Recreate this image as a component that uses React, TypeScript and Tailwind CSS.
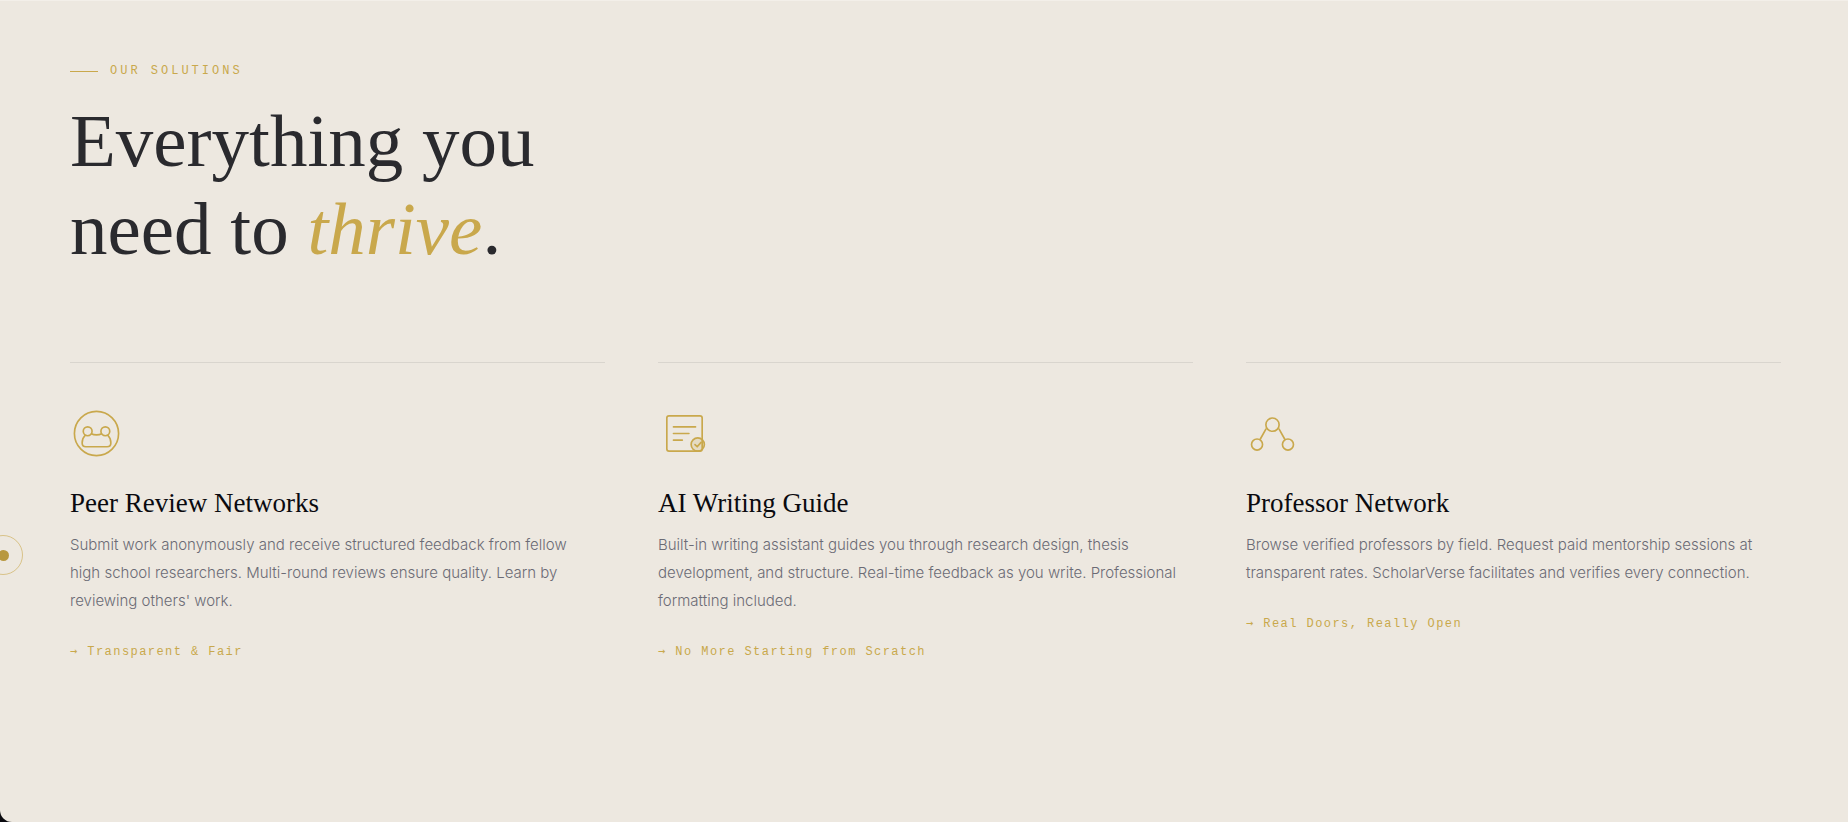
import type { ReactNode } from "react";

type Solution = {
  title: string;
  body: string;
  tag: string;
  icon: ReactNode;
};

const solutions: Solution[] = [
  {
    title: "Peer Review Networks",
    body: "Submit work anonymously and receive structured feedback from fellow high school researchers. Multi-round reviews ensure quality. Learn by reviewing others' work.",
    tag: "Transparent & Fair",
    icon: (
      <>
        <circle cx="24" cy="24" r="20" />
        <circle cx="16" cy="22" r="4" />
        <circle cx="32" cy="22" r="4" />
        <path d="M13.6 25.8c-1.8 1.8-2.6 4-2.6 6.800 0 2.400 1.200 3.400 3.400 3.400h19.200c2.200 0 3.400-1 3.400-3.400 0-2.800-.8-5-2.600-6.800" />
        <path d="M19.400 24.200c1.200.7 2.800 1 4.600 1s3.400-.3 4.600-1" />
      </>
    ),
  },
  {
    title: "AI Writing Guide",
    body: "Built-in writing assistant guides you through research design, thesis development, and structure. Real-time feedback as you write. Professional formatting included.",
    tag: "No More Starting from Scratch",
    icon: (
      <>
        <rect x="8" y="8" width="32" height="32" rx="2" />
        <path d="M14 18h20M14 24h14M14 30h8" />
        <circle cx="36" cy="34" r="6" fill="#c9a84c" fillOpacity="0.2" />
        <path d="M33.5 34l2 2 3.5-4" />
      </>
    ),
  },
  {
    title: "Professor Network",
    body: "Browse verified professors by field. Request paid mentorship sessions at transparent rates. ScholarVerse facilitates and verifies every connection.",
    tag: "Real Doors, Really Open",
    icon: (
      <>
        <circle cx="24" cy="16" r="6" />
        <circle cx="10" cy="34" r="5" />
        <circle cx="38" cy="34" r="5" />
        <path d="M18 20l-5 9M30 20l5 9" />
      </>
    ),
  },
];

const SolutionCard = ({ title, body, tag, icon }: Solution) => (
  <article className="border-t border-[#d9d5ce] pt-11">
    <svg
      viewBox="0 0 48 48"
      className="h-[53px] w-[53px]"
      fill="none"
      stroke="#c9a84c"
      strokeWidth="1.5"
      strokeLinecap="round"
      strokeLinejoin="round"
      aria-hidden="true"
    >
      {icon}
    </svg>
    <h3 className="mt-[27px] font-['Liberation_Serif',serif] text-[27px] leading-8 text-[#0a0a0f]">
      {title}
    </h3>
    <p className="mt-3 pr-2 font-['Inter',sans-serif] text-[15px] leading-7 font-light text-[#6b6b75]">
      {body}
    </p>
    <p className="mt-6 font-['Liberation_Mono',monospace] text-xs leading-6 tracking-[0.12em] text-[#c9a84c]">
      <span className="font-['DejaVu_Sans_Mono',monospace]">→</span> {tag}
    </p>
  </article>
);

const App = () => {
  return (
    <main className="relative min-h-screen overflow-hidden bg-[#0a0a0f]">
      <section className="min-h-screen rounded-bl-xl border-t border-[#f3efe9] bg-[#ede8e0] pt-[60px] pr-[67px] pb-20 pl-[70px]">
        <div className="flex items-center gap-3 font-['Liberation_Mono',monospace] text-xs leading-5 tracking-[0.25em] text-[#c9a84c]">
          <span className="h-px w-7 bg-[#c9a84c]" />
          OUR SOLUTIONS
        </div>
        <h2 className="mt-4 font-['Liberation_Serif',serif] text-[75px] leading-[88px] text-[#2a2a2e]">
          Everything you
          <br />
          need to <em className="text-[#c9a84c]">thrive</em>.
        </h2>
        <div className="mt-[89px] grid grid-cols-3 gap-[53px]">
          {solutions.map((solution) => (
            <SolutionCard key={solution.title} {...solution} />
          ))}
        </div>
      </section>

      {/* custom cursor, parked at the left edge */}
      <div className="pointer-events-none absolute top-[535px] -left-[17px] flex h-10 w-10 items-center justify-center rounded-full border border-[#c9a84c]/60">
        <span className="h-[11px] w-[11px] rounded-full bg-[#b8983f]" />
      </div>
    </main>
  );
};

export default App;
